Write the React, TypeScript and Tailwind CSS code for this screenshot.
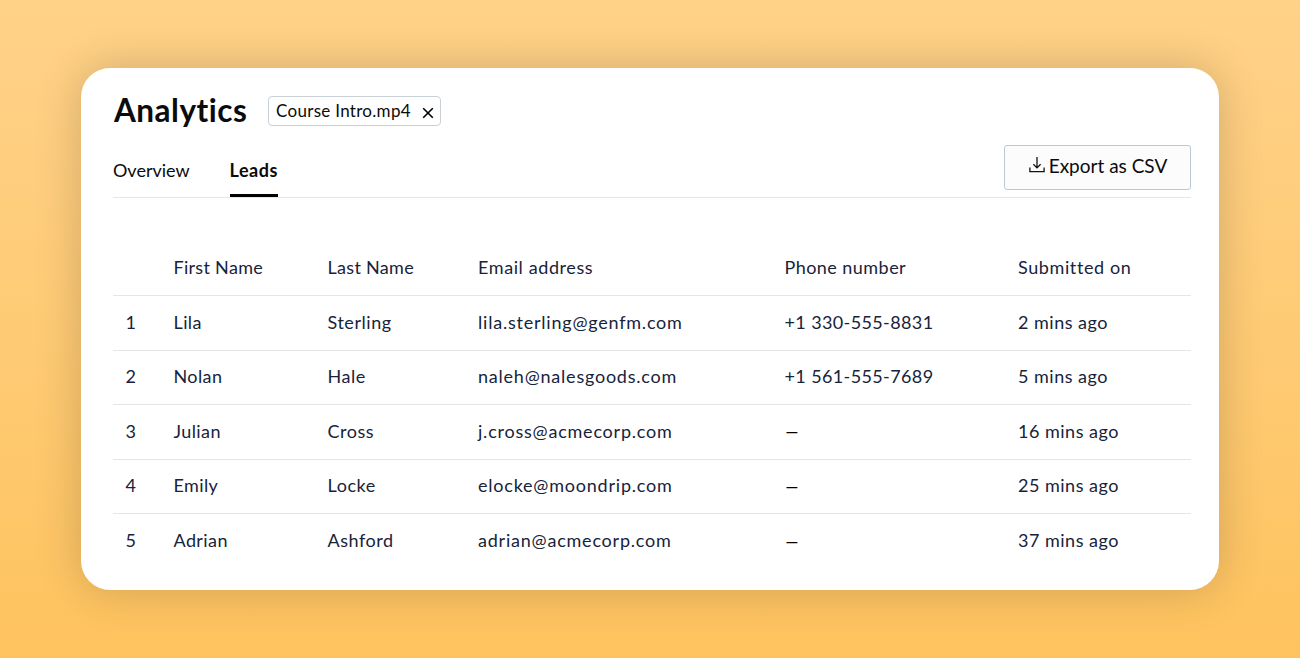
import React from "react";

type Lead = {
  id: number;
  firstName: string;
  lastName: string;
  email: string;
  phone?: string;
  submitted: string;
};

const leads: Lead[] = [
  { id: 1, firstName: "Lila", lastName: "Sterling", email: "lila.sterling@genfm.com", phone: "+1 330-555-8831", submitted: "2 mins ago" },
  { id: 2, firstName: "Nolan", lastName: "Hale", email: "naleh@nalesgoods.com", phone: "+1 561-555-7689", submitted: "5 mins ago" },
  { id: 3, firstName: "Julian", lastName: "Cross", email: "j.cross@acmecorp.com", submitted: "16 mins ago" },
  { id: 4, firstName: "Emily", lastName: "Locke", email: "elocke@moondrip.com", submitted: "25 mins ago" },
  { id: 5, firstName: "Adrian", lastName: "Ashford", email: "adrian@acmecorp.com", submitted: "37 mins ago" },
];

const rowClass =
  "grid grid-cols-[60.5px_154px_150.5px_306.5px_233.5px_1fr] items-center whitespace-nowrap border-b border-[#e3e5e7] pb-[1.5px]";

const DownloadIcon = () => (
  <svg className="mb-[3px] h-4 w-4" viewBox="0 0 16 16" fill="none" stroke="#111" strokeWidth="1.3">
    <path d="M8 0V10.6M4.4 7.3L8 10.9L11.6 7.3M0.9 10.5V14.6H15.1V10.5" />
  </svg>
);

const FileTag = ({ name }: { name: string }) => (
  <div className="flex h-[30px] w-[172.5px] items-center justify-between rounded-[4px] border border-[#c9d1d6] pl-[7px] pr-[6px]">
    <span className="text-[17px] tracking-[0.3px]">{name}</span>
    <svg className="mt-[3px] h-3 w-3" viewBox="0 0 12 12" fill="none" stroke="#000" strokeWidth="1.6">
      <path d="M1.2 1.2L10.8 10.8M10.8 1.2L1.2 10.8" />
    </svg>
  </div>
);

const LeadsTable = () => (
  <div className="mt-[43px] text-[18px] text-[#17233a]">
    <div className={`${rowClass} h-[55px] tracking-[0.3px]`}>
      <span />
      <span>First Name</span>
      <span>Last Name</span>
      <span className="tracking-[0.6px]">Email address</span>
      <span className="tracking-[0.45px]">Phone number</span>
      <span className="tracking-[0.6px]">Submitted on</span>
    </div>
    {leads.map((lead) => (
      <div key={lead.id} className={`${rowClass} h-[54.5px] tracking-[0.4px] last:border-b-0`}>
        <span className="w-[36px] text-center">{lead.id}</span>
        <span>{lead.firstName}</span>
        <span className="tracking-[0.55px]">{lead.lastName}</span>
        <span className="tracking-[0.78px]">{lead.email}</span>
        {lead.phone ? (
          <span className="tracking-[0.38px]">{lead.phone}</span>
        ) : (
          <span className="pl-px text-[16px] font-bold text-black">—</span>
        )}
        <span className="tracking-[0.5px]">{lead.submitted}</span>
      </div>
    ))}
  </div>
);

const App = () => {
  return (
    <div className="flex h-[658px] w-[1300px] items-start justify-center overflow-hidden bg-linear-to-b from-[#ffd289] to-[#fec35e] pt-[68px] font-['Lato',sans-serif] text-[#0b0b0b]">
      <div className="h-[522px] w-[1138px] rounded-[29px] bg-white pl-8 pr-7 pt-6 shadow-[0_0_46px_rgba(0,0,0,0.19)]">
        <div className="flex h-[38px] items-center">
          <h1 className="w-[155px] pb-0.5 pl-px text-[31.5px] font-bold leading-[36px] tracking-[0.5px]">
            Analytics
          </h1>
          <FileTag name="Course Intro.mp4" />
        </div>
        <div className="flex h-[68px] items-end justify-between border-b border-[#e3e8ea]">
          <div className="flex text-[18px] leading-6">
            <span className="w-[116.5px] pb-[15px]">Overview</span>
            <span className="w-[48px] border-b-[3px] border-black pb-[12px] font-bold tracking-[0.55px]">
              Leads
            </span>
          </div>
          <button className="mb-[7px] flex h-[45px] w-[187px] items-center justify-center gap-1 rounded-[3px] border border-[#bdc9cf] bg-[#fcfcfd] pb-0.5 pl-px text-[19px]">
            <DownloadIcon />
            <span>Export as CSV</span>
          </button>
        </div>
        <LeadsTable />
      </div>
    </div>
  );
};

export default App;
